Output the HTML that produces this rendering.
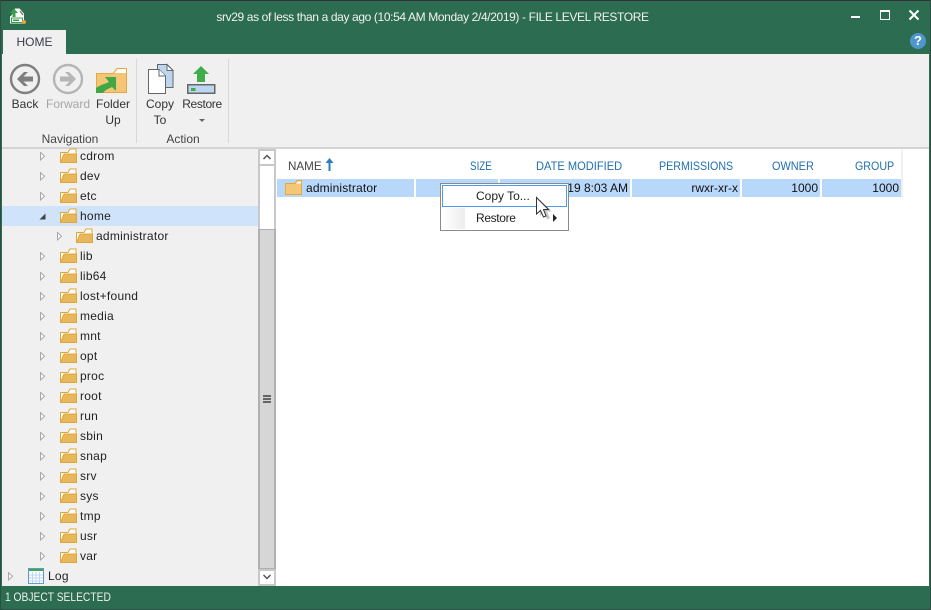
<!DOCTYPE html>
<html><head><meta charset="utf-8">
<style>
html,body{margin:0;padding:0;width:931px;height:610px;overflow:hidden;background:#2c6c50}
*{box-sizing:border-box}
#w{position:relative;width:931px;height:610px;background:#2c6c50;font-family:"Liberation Sans",sans-serif;font-size:12px;color:#222;overflow:hidden}
.a{position:absolute;white-space:nowrap}
.lbl{position:absolute;text-align:center;color:#333;line-height:16px;white-space:nowrap}
.row{position:absolute;left:2px;width:256px;height:20px}
.row .t{position:absolute;top:2px;left:78px;line-height:16px;color:#222;letter-spacing:.25px}
.row svg{position:absolute}
.row .x{left:38px;top:6px}
.row .f{left:58px;top:2px}
.h{position:absolute;top:158px;color:#1f6fb0;line-height:16px;white-space:nowrap;font-size:12px;transform-origin:left center}
.c{position:absolute;top:179px;height:18px;background:#b7d8fb;line-height:18px;text-align:right;padding-right:2px;color:#111}
</style></head><body>
<div id="w">
<svg width="0" height="0" style="position:absolute"><defs>
<g id="fo"><path d="M.5 14.500V4.500H8L10 1H16V14.500Z" fill="#fff" stroke="#e0a63a"/><path d="M.5 14.500 4 6H16.500V14.500Z" fill="#e8b75c" stroke="#e0a63a"/></g>
<path id="ar" d="M.5.5V8L4.500 4.250Z" fill="#fff" stroke="#a8a8a8"/>
</defs></svg>

<div class="a" style="left:0;top:0;width:931px;height:1px;background:#333"></div>
<div class="a" style="left:0;top:0;width:1px;height:610px;background:#2f4f42"></div>
<div class="a" style="left:930px;top:0;width:1px;height:610px;background:#2f4f42"></div>
<div class="a" style="left:0;top:609px;width:931px;height:1px;background:#2f4f42"></div>

<svg class="a" style="left:8px;top:7px" width="19" height="18" viewBox="0 0 19 18"><path d="M3 9V15.500H15V7L11 2.500H7" fill="#fff" stroke="#fff" stroke-width="2"/><path d="M6 1.500 2 6H4.500V10H7.500V6H10Z" fill="#37a14a"/><rect x="3.500" y="11" width="11" height="4.500" fill="#fff" stroke="#37a14a"/><rect x="5" y="12.500" width="6" height="1.500" fill="#37a14a"/><circle cx="16" cy="15" r="2" fill="#e8a23c"/><path d="M12 4 15 8" stroke="#777" stroke-width="1.400"/></svg>
<div class="a" style="left:0;width:865px;top:9px;text-align:center;color:#f2f2f2;line-height:16px;letter-spacing:-.37px">srv29 as of less than a day ago (10:54 AM Monday 2/4/2019) - FILE LEVEL RESTORE</div>

<div class="a" style="left:851px;top:16px;width:9px;height:2px;background:#fff"></div>
<div class="a" style="left:880px;top:10px;width:10px;height:10px;border:1px solid #fff;border-top-width:2px"></div>
<svg class="a" style="left:908px;top:9px" width="12" height="12"><path d="M1.500 1.500 10.500 10.500M10.500 1.500 1.500 10.500" stroke="#fff" stroke-width="2"/></svg>
<div class="a" style="left:910px;top:33px;width:16px;height:16px;border-radius:50%;background:#4f96cc;color:#fff;font-weight:bold;font-size:13px;line-height:16px;text-align:center">?</div>

<div class="a" style="left:3px;top:30px;width:63px;height:25px;background:#f0f0f0;text-align:center;line-height:25px;color:#3a3a4a;">HOME</div>
<div class="a" style="left:2px;top:54px;width:927px;height:94px;background:#f0f0f0"></div>
<div class="a" style="left:2px;top:147px;width:927px;height:2px;background:#d4d4d4"></div>
<div class="a" style="left:136px;top:59px;width:1px;height:84px;background:#d8d8d8"></div>
<div class="a" style="left:228px;top:59px;width:1px;height:84px;background:#d8d8d8"></div>

<svg class="a" style="left:9px;top:63px" width="32" height="32"><circle cx="16" cy="16" r="14" fill="none" stroke="#7f7f7f" stroke-width="2.400"/><path d="M15 9 8 16 15 23H19L14.500 18.500H24V13.500H14.500L19 9Z" fill="#7f7f7f"/></svg>
<svg class="a" style="left:52px;top:63px" width="32" height="32"><circle cx="16" cy="16" r="14" fill="none" stroke="#b5b5b5" stroke-width="2.400"/><path d="M17 9 24 16 17 23H13L17.500 18.500H8V13.500H17.500L13 9Z" fill="#b5b5b5"/></svg>
<svg class="a" style="left:95px;top:67px" width="33" height="27"><path d="M1.500 6.500H18L22 1.500H31.500V25.500H1.500Z" fill="#f4c676" stroke="#e5a83f"/><path d="M19.500 6 22.500 2H31V6Z" fill="#fff"/><path d="M10 10H21V24L17 20C13 22 10 23 8 26H1V21C5 18 10 17 14 15Z" fill="#3fa845"/></svg>
<svg class="a" style="left:147px;top:63px" width="27" height="32"><path d="M10.500 1.500H20L26 7.500V24.500H10.500Z" fill="#bcd6f0" stroke="#666"/><path d="M20 1.500V7.500H26Z" fill="#fff" stroke="#666"/><path d="M1.500 6.500H12L18.500 13V30.500H1.500Z" fill="#fff" stroke="#666"/><path d="M12 6.500V13H18.500" fill="#fff" stroke="#666"/></svg>
<svg class="a" style="left:187px;top:65px" width="29" height="30"><path d="M14 1 22 9H18V17H10V9H6Z" fill="#3fae4a"/><rect x=".75" y="19.750" width="27" height="8.500" fill="#bcd6f0" stroke="#666" stroke-width="1.500"/><rect x="4" y="23" width="4.500" height="3" fill="#3fae4a"/></svg>

<div class="lbl" style="left:4px;width:42px;top:96px">Back</div>
<div class="lbl" style="left:42px;width:52px;top:96px;color:#a6a6a6">Forward</div>
<div class="lbl" style="left:92px;width:42px;top:96px">Folder</div>
<div class="lbl" style="left:92px;width:42px;top:112px">Up</div>
<div class="lbl" style="left:140px;width:40px;top:96px">Copy</div>
<div class="lbl" style="left:140px;width:40px;top:112px">To</div>
<div class="lbl" style="left:180px;width:44px;top:96px;letter-spacing:-.35px">Restore</div>
<div class="a" style="left:199px;top:119px;width:0;height:0;border:3px solid transparent;border-top:3px solid #666"></div>
<div class="lbl" style="left:30px;width:80px;top:131px;color:#444">Navigation</div>
<div class="lbl" style="left:150px;width:66px;top:131px;color:#444">Action</div>

<div class="a" style="left:2px;top:149px;width:256px;height:437px;background:#f0f0f0"></div>
<div class="a" style="left:2px;top:206px;width:256px;height:20px;background:#cfe4fa"></div>

<div class="row" style="top:146px"><svg class="x" width="6" height="9"><use href="#ar"/></svg><svg class="f" width="17" height="15"><use href="#fo"/></svg><div class="t">cdrom</div></div>
<div class="row" style="top:166px"><svg class="x" width="6" height="9"><use href="#ar"/></svg><svg class="f" width="17" height="15"><use href="#fo"/></svg><div class="t">dev</div></div>
<div class="row" style="top:186px"><svg class="x" width="6" height="9"><use href="#ar"/></svg><svg class="f" width="17" height="15"><use href="#fo"/></svg><div class="t">etc</div></div>
<div class="row" style="top:206px"><svg style="left:37px;top:7px" width="7" height="7"><path d="M6.500.5V6.500H.5Z" fill="#444"/></svg><svg class="f" width="17" height="15"><use href="#fo"/></svg><div class="t">home</div></div>
<div class="row" style="top:226px"><svg style="left:55px;top:6px" width="6" height="9"><use href="#ar"/></svg><svg style="left:74px;top:2px" width="17" height="15"><use href="#fo"/></svg><div class="t" style="left:94px">administrator</div></div>
<div class="row" style="top:246px"><svg class="x" width="6" height="9"><use href="#ar"/></svg><svg class="f" width="17" height="15"><use href="#fo"/></svg><div class="t">lib</div></div>
<div class="row" style="top:266px"><svg class="x" width="6" height="9"><use href="#ar"/></svg><svg class="f" width="17" height="15"><use href="#fo"/></svg><div class="t">lib64</div></div>
<div class="row" style="top:286px"><svg class="x" width="6" height="9"><use href="#ar"/></svg><svg class="f" width="17" height="15"><use href="#fo"/></svg><div class="t">lost+found</div></div>
<div class="row" style="top:306px"><svg class="x" width="6" height="9"><use href="#ar"/></svg><svg class="f" width="17" height="15"><use href="#fo"/></svg><div class="t">media</div></div>
<div class="row" style="top:326px"><svg class="x" width="6" height="9"><use href="#ar"/></svg><svg class="f" width="17" height="15"><use href="#fo"/></svg><div class="t">mnt</div></div>
<div class="row" style="top:346px"><svg class="x" width="6" height="9"><use href="#ar"/></svg><svg class="f" width="17" height="15"><use href="#fo"/></svg><div class="t">opt</div></div>
<div class="row" style="top:366px"><svg class="x" width="6" height="9"><use href="#ar"/></svg><svg class="f" width="17" height="15"><use href="#fo"/></svg><div class="t">proc</div></div>
<div class="row" style="top:386px"><svg class="x" width="6" height="9"><use href="#ar"/></svg><svg class="f" width="17" height="15"><use href="#fo"/></svg><div class="t">root</div></div>
<div class="row" style="top:406px"><svg class="x" width="6" height="9"><use href="#ar"/></svg><svg class="f" width="17" height="15"><use href="#fo"/></svg><div class="t">run</div></div>
<div class="row" style="top:426px"><svg class="x" width="6" height="9"><use href="#ar"/></svg><svg class="f" width="17" height="15"><use href="#fo"/></svg><div class="t">sbin</div></div>
<div class="row" style="top:446px"><svg class="x" width="6" height="9"><use href="#ar"/></svg><svg class="f" width="17" height="15"><use href="#fo"/></svg><div class="t">snap</div></div>
<div class="row" style="top:466px"><svg class="x" width="6" height="9"><use href="#ar"/></svg><svg class="f" width="17" height="15"><use href="#fo"/></svg><div class="t">srv</div></div>
<div class="row" style="top:486px"><svg class="x" width="6" height="9"><use href="#ar"/></svg><svg class="f" width="17" height="15"><use href="#fo"/></svg><div class="t">sys</div></div>
<div class="row" style="top:506px"><svg class="x" width="6" height="9"><use href="#ar"/></svg><svg class="f" width="17" height="15"><use href="#fo"/></svg><div class="t">tmp</div></div>
<div class="row" style="top:526px"><svg class="x" width="6" height="9"><use href="#ar"/></svg><svg class="f" width="17" height="15"><use href="#fo"/></svg><div class="t">usr</div></div>
<div class="row" style="top:546px"><svg class="x" width="6" height="9"><use href="#ar"/></svg><svg class="f" width="17" height="15"><use href="#fo"/></svg><div class="t">var</div></div>
<div class="row" style="top:566px"><svg style="left:6px;top:6px" width="6" height="9"><use href="#ar"/></svg><svg style="left:26px;top:2px" width="16" height="16"><rect x=".5" y=".5" width="15" height="15" fill="#fff" stroke="#5b9bd5"/><path d="M1 2H15" stroke="#3fa845" stroke-width="2"/><path d="M1 7H15M1 10H15M1 13H15M4.500 4V15M8 4V15M11.500 4V15" stroke="#bcd6f0"/></svg><div class="t" style="left:46px">Log</div></div>

<div class="a" style="left:258px;top:149px;width:18px;height:437px;background:#fff;border-left:2px solid #c8c8c8;border-right:2px solid #c8c8c8"></div>
<div class="a" style="left:258px;top:149px;width:18px;height:17px;background:#fff;border:2px solid #c8c8c8"></div>
<svg class="a" style="left:262px;top:153px" width="10" height="8"><path d="M1.500 6 5 2.500 8.500 6" fill="none" stroke="#555" stroke-width="1.500"/></svg>
<div class="a" style="left:258px;top:229px;width:18px;height:340px;background:#d6d6d6;border:2px solid #b0b0b0;border-top-width:1px;border-bottom-width:1px"></div>
<div class="a" style="left:263px;top:395px;width:8px;height:2px;background:#666"></div>
<div class="a" style="left:263px;top:398px;width:8px;height:2px;background:#666"></div>
<div class="a" style="left:263px;top:401px;width:8px;height:2px;background:#666"></div>
<div class="a" style="left:258px;top:569px;width:18px;height:17px;background:#fff;border:2px solid #c8c8c8"></div>
<svg class="a" style="left:262px;top:573px" width="10" height="8"><path d="M1.500 2 5 5.500 8.500 2" fill="none" stroke="#555" stroke-width="1.500"/></svg>

<div class="a" style="left:276px;top:149px;width:653px;height:437px;background:#fff"></div>
<div class="a" style="left:901px;top:149px;width:2px;height:49px;background:#f0f0f0"></div>

<div class="h" style="left:288px;color:#444;transform:scaleX(.97)">NAME</div>
<svg class="a" style="left:325px;top:158px" width="9" height="13"><path d="M4.500 0 8.500 5H5.500V13H3.500V5H.5Z" fill="#2a7fc4"/></svg>
<div class="h" style="left:470px;transform:scaleX(.82)">SIZE</div>
<div class="h" style="left:536px;transform:scaleX(.925)">DATE MODIFIED</div>
<div class="h" style="left:659px;transform:scaleX(.89)">PERMISSIONS</div>
<div class="h" style="left:772px;transform:scaleX(.91)">OWNER</div>
<div class="h" style="left:855px;transform:scaleX(.89)">GROUP</div>

<div class="c" style="left:277px;width:137px;text-align:left;padding-left:29px;letter-spacing:.15px">administrator</div>
<div class="c" style="left:416px;width:82px"></div>
<div class="c" style="left:500px;width:130px">2/4/2019 8:03 AM</div>
<div class="c" style="left:632px;width:108px">rwxr-xr-x</div>
<div class="c" style="left:742px;width:78px">1000</div>
<div class="c" style="left:822px;width:79px">1000</div>
<div class="a" style="left:500px;top:179px;width:69px;height:5px;background:#b7d8fb"></div>
<svg class="a" style="left:285px;top:180px" width="17" height="15"><path d="M.5 3.500H10L12 .5H16.500V14.500H.5Z" fill="#f4c676" stroke="#e5a83f"/><path d="M11 3.500 12.500 1.500H16V3.500Z" fill="#fff"/></svg>

<div class="a" style="left:440px;top:183px;width:129px;height:48px;background:#fff;border:1px solid #8a8a8a"></div>
<div class="a" style="left:443px;top:208px;width:22px;height:21px;background:linear-gradient(90deg,#fff,#ededed)"></div>
<div class="a" style="left:442px;top:185px;width:125px;height:22px;background:#fff;border:1px solid #4a9bea"></div>
<div class="a" style="left:476px;top:188px;line-height:16px;color:#222">Copy To...</div>
<div class="a" style="left:476px;top:210px;line-height:16px;color:#222;letter-spacing:-.35px">Restore</div>
<div class="a" style="left:553px;top:214px;width:0;height:0;border:4px solid transparent;border-left:4px solid #222;border-right:0"></div>

<svg class="a" style="left:534px;top:196px" width="20" height="26"><path d="M4 3V19L8 15.500 11 22.500 14 21 11 14.500H16Z" fill="#000" opacity=".22" transform="translate(2 1)"/><path d="M2.500 1.500V18L6.500 14.500 9.500 21 12 20 9.500 13.500H14.500Z" fill="#fff" stroke="#333"/></svg>

<div class="a" style="left:5px;top:589px;line-height:16px;color:#f0f0f0;transform:scaleX(.855);transform-origin:left center">1 OBJECT SELECTED</div>
</div>
</body></html>
